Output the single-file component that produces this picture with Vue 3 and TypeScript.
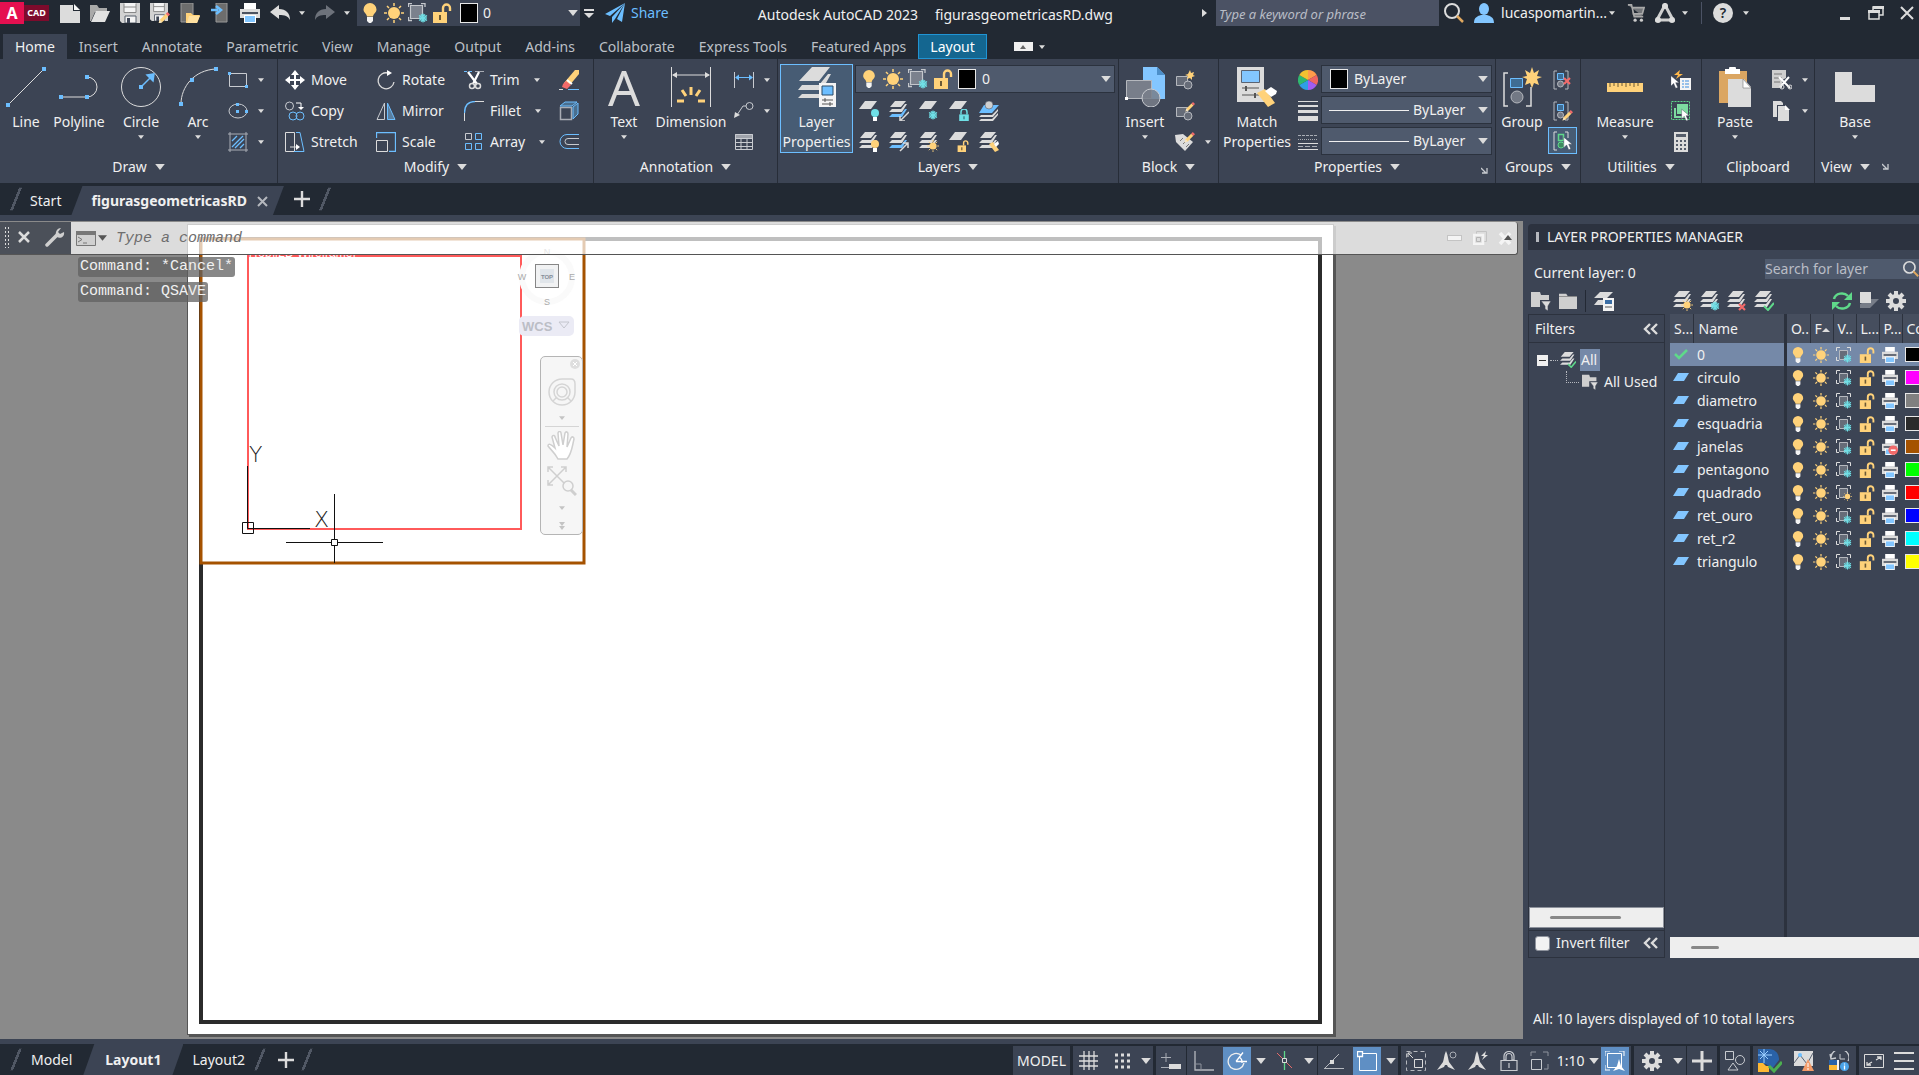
<script setup lang="ts">
import { ref } from 'vue'

interface Layer {
  name: string
  color: string
  noPlot?: boolean
  thawed?: boolean
}

const menuTabs: string[] = [
  'Home', 'Insert', 'Annotate', 'Parametric', 'View', 'Manage', 'Output',
  'Add-ins', 'Collaborate', 'Express Tools', 'Featured Apps', 'Layout',
]

const layers: Layer[] = [
  { name: '0', color: '#000000' },
  { name: 'circulo', color: '#ff00ff' },
  { name: 'diametro', color: '#808080' },
  { name: 'esquadria', color: '#2b2b2b' },
  { name: 'janelas', color: '#a55200', noPlot: true },
  { name: 'pentagono', color: '#00ff00' },
  { name: 'quadrado', color: '#ff0000', thawed: true },
  { name: 'ret_ouro', color: '#0000ff' },
  { name: 'ret_r2', color: '#00ffff' },
  { name: 'triangulo', color: '#ffff00' },
]

const modifyTools = [
  { id: 'move', label: 'Move' },
  { id: 'rotate', label: 'Rotate' },
  { id: 'trim', label: 'Trim', menu: true },
  { id: 'erase', label: '' },
  { id: 'copy', label: 'Copy' },
  { id: 'mirror', label: 'Mirror' },
  { id: 'fillet', label: 'Fillet', menu: true },
  { id: 'explode', label: '' },
  { id: 'stretch', label: 'Stretch' },
  { id: 'scale', label: 'Scale' },
  { id: 'array', label: 'Array', menu: true },
  { id: 'offset', label: '' },
]

const layerTools = [
  ['layoff', 'layiso', 'layfrz', 'laylck', 'laycur'],
  ['layon', 'layuniso', 'laythw', 'layulk', 'laymch'],
]

const activeTab = ref('Home')
const command = ref('')
const keyword = ref('')
const layerSearch = ref('')
const invert = ref(false)
</script>

<template>
  <div class="app">
    <svg class="defs" aria-hidden="true">
      <symbol id="down" viewBox="0 0 8 5"><path d="M0 0h8L4 5z" fill="#dcdcdc" /></symbol>
      <symbol id="stack" viewBox="0 0 20 20">
        <path d="M6 0h11l-5 6H1zM3 8h9l4-5h2l-5 8H0zM3 13h9l4-5h2l-5 8H0z" fill="#dcdcdc" />
      </symbol>
      <symbol id="bulb" viewBox="0 0 20 20">
        <path d="M10 0a6.500 6.500 0 0 1 6.500 6.500c0 3-3 4-3.500 7H7c-.5-3-3.500-4-3.500-7A6.500 6.500 0 0 1 10 0z" fill="#ffd27a" />
        <path d="M7 14h6v4l-2 2H9l-2-2z" fill="#f4f4f4" />
      </symbol>
      <symbol id="sun" viewBox="0 0 20 20">
        <circle cx="10" cy="10" r="6" fill="#ffd27a" />
        <path d="M10 0v3M10 17v3M0 10h3M17 10h3M3 3l2 2M15 15l2 2M17 3l-2 2M5 15l-2 2" stroke="#ffd27a" stroke-width="1.500" />
      </symbol>
      <symbol id="flake" viewBox="0 0 20 20">
        <circle cx="10" cy="10" r="8" fill="#6fdfe6" fill-opacity=".35" />
        <path d="M10 1v18M2 5l16 10M18 5L2 15M6 3l4 4 4-4M6 17l4-4 4 4M2 10h16" stroke="#6fdfe6" stroke-width="2.200" fill="none" />
      </symbol>
      <symbol id="vp" viewBox="0 0 20 20">
        <path d="M2.500 2.500h12v13h-12z" fill="#7b818d" stroke="#c4c7cc" stroke-width="1.200" />
        <path d="M.5 4V.5H4M13 .5h4V4M.5 14v3.500H4" fill="none" stroke="#c4c7cc" stroke-width="1.300" />
      </symbol>
      <symbol id="vpfrz" viewBox="0 0 20 20">
        <use href="#vp" width="20" height="20" /><use href="#flake" x="10" y="10" width="10" height="10" />
      </symbol>
      <symbol id="vpopen" viewBox="0 0 16 16">
        <path d="M3.500 3.500h8v9h-8z" fill="#666c78" stroke="#b5b8be" /><path d="M.5 4V.5H4M11 .5h3.500V4M.5 10v3.500H3" fill="none" stroke="#dcdcdc" />
      </symbol>
      <symbol id="rowfrz" viewBox="0 0 16 16"><use href="#vpopen" width="16" height="16" /><use href="#flake" x="7" y="7" width="9" height="9" /></symbol>
      <symbol id="rowsun" viewBox="0 0 16 16"><use href="#vpopen" width="16" height="16" /><use href="#sun" x="7" y="7" width="9" height="9" /></symbol>
      <symbol id="unlock" viewBox="0 0 20 20">
        <path d="M1 9h14v11H1z" fill="#ffd27a" />
        <path d="M11 9V5a3.500 3.500 0 0 1 7 0v3" fill="none" stroke="#ffd27a" stroke-width="2.400" />
        <path d="M8 12v5" stroke="#6d5a35" stroke-width="2" />
      </symbol>
      <symbol id="lock" viewBox="0 0 20 20">
        <path d="M2 9h16v11H2z" fill="#6fdfe6" /><path d="M5 9V5a5 5 0 0 1 10 0v4" fill="none" stroke="#6fdfe6" stroke-width="2.400" />
        <path d="M10 12v5" stroke="#34707a" stroke-width="2" />
      </symbol>
      <symbol id="print" viewBox="0 0 20 20">
        <path d="M4 0h12v6H4z" fill="#fff" /><path d="M0 6h20v9H0z" fill="#dcdcdc" /><path d="M2 9h16v2H2z" fill="#4b5260" />
        <path d="M4 12h12v8H4z" fill="#fff" /><path d="M5 13h10v6H5z" fill="#83c6ff" />
      </symbol>
      <symbol id="noprint" viewBox="0 0 20 20">
        <use href="#print" width="20" height="20" /><circle cx="14" cy="14" r="6" fill="#f26a6a" /><path d="M11 14h6" stroke="#fff" stroke-width="2" />
      </symbol>
      <symbol id="floppy" viewBox="0 0 20 20">
        <path d="M0 0h20v20H2l-2-2z" fill="#d2d2d2" /><path d="M4 0h12v9H4z" fill="#f4f4f4" /><path d="M4 4h12M4 .5v9h12v-9" stroke="#888" fill="none" />
        <path d="M5 13h11v7H5z" fill="#f4f4f4" stroke="#59606d" /><path d="M7 15h3v5H7z" fill="#3c4454" />
      </symbol>
      <symbol id="pencil" viewBox="0 0 20 20">
        <path d="M1 19l2-6L13 3l4 4L7 17z" fill="#ffd27a" /><path d="M13 3l3-3 4 4-3 3z" fill="#f26a6a" /><path d="M1 19l2-6 4 4z" fill="#f7e6c4" />
      </symbol>
      <symbol id="folder" viewBox="0 0 20 20"><path d="M0 2h8l2 3h10v14H0z" fill="#cfcfcf" /><path d="M0 5h20" stroke="#888" /></symbol>
      <symbol id="mag" viewBox="0 0 20 20">
        <circle cx="8" cy="8" r="7" fill="none" stroke="#dcdcdc" stroke-width="2" /><path d="M13 13l6 6" stroke="#e0a860" stroke-width="2.500" />
      </symbol>
      <symbol id="gear" viewBox="0 0 20 20">
        <circle cx="10" cy="10" r="5" fill="none" stroke="#dcdcdc" stroke-width="4" />
        <path d="M10 0v4M10 16v4M0 10h4M16 10h4M3 3l3 3M14 14l3 3M17 3l-3 3M6 14l-3 3" stroke="#dcdcdc" stroke-width="4" />
      </symbol>
      <symbol id="cursor" viewBox="0 0 20 20"><path d="M4 1v15l4-4 3 7 3-1-3-7h5z" fill="#fff" stroke="#3c4454" stroke-width="0.600" /></symbol>
      <symbol id="plus" viewBox="0 0 16 16"><path d="M8 0v16M0 8h16" stroke="#dcdcdc" stroke-width="2.400" /></symbol>
      <symbol id="chev" viewBox="0 0 16 12"><path d="M7 1L2 6l5 5M14 1L9 6l5 5" fill="none" stroke="#dcdcdc" stroke-width="2.400" /></symbol>
      <symbol id="corner" viewBox="0 0 8 8"><path d="M0 1l5 5M6 1v5H1" fill="none" stroke="#c8cbd0" stroke-width="1.300" /></symbol>

      <symbol id="new" viewBox="0 0 20 20"><path d="M0 2h13v6h7v12H0z" fill="#dcdcdc" /><path d="M14 1l6 6h-6z" fill="#f8f8f8" /></symbol>
      <symbol id="open" viewBox="0 0 20 20"><path d="M0 2h7l2 3h8v4H5L1 18H0z" fill="#a9a9a9" /><path d="M6 8h14l-5 11H1z" fill="#e2e2e2" /></symbol>
      <symbol id="saveas" viewBox="0 0 20 20"><use href="#floppy" width="18" height="18" /><use href="#pencil" x="8" y="9" width="12" height="12" /></symbol>
      <symbol id="mobopen" viewBox="0 0 20 20">
        <path d="M1 0h12v19H1z" fill="#6d6d6d" stroke="#999" /><path d="M6 10h5l2 2h7l-3 8H6z" fill="#ffd27a" /><path d="M9 13h11l-3 7H7z" fill="#ffe0a0" />
      </symbol>
      <symbol id="mobsave" viewBox="0 0 20 20">
        <path d="M6 0h11v19H6z" fill="#6d6d6d" stroke="#999" /><path d="M1 7h7M6 3l5 4-5 4" stroke="#6cbeff" stroke-width="2.500" fill="none" />
      </symbol>
      <symbol id="undo" viewBox="0 0 20 20"><path d="M0 9l9-7v4c7 0 11 4 11 11-2-4-5-5-11-5v4z" /></symbol>
      <symbol id="redo" viewBox="0 0 20 20"><path d="M20 9l-9-7v4C4 6 0 10 0 17c2-4 5-5 11-5v4z" /></symbol>
      <symbol id="plane" viewBox="0 0 20 20"><path d="M20 0L0 11l5 2zM20 0L7 14v6l3-4zM20 0l-8 16 5 3z" fill="#6cbeff" /></symbol>
      <symbol id="user" viewBox="0 0 20 20"><ellipse cx="10" cy="6" rx="5" ry="6" fill="#83c6ff" /><path d="M0 20c0-6 4-7 7-8h6c3 1 7 2 7 8z" fill="#83c6ff" /></symbol>
      <symbol id="cart" viewBox="0 0 20 20"><path d="M1 1h4l3 13h10M6 4h13l-2 7H7z" stroke="#a9a9a9" stroke-width="1.800" fill="#a9a9a9" fill-opacity=".6" /><circle cx="9" cy="18" r="1.800" fill="#ccc" /><circle cx="16" cy="18" r="1.800" fill="#ccc" /></symbol>
      <symbol id="appstore" viewBox="0 0 20 20"><path d="M10 2L2 17h16z" fill="none" stroke="#cfcfcf" stroke-width="3" /><circle cx="10" cy="3" r="3" fill="#dcdcdc" /><circle cx="3" cy="17" r="3" fill="#dcdcdc" /><circle cx="17" cy="17" r="3" fill="#dcdcdc" /></symbol>

      <symbol id="line" viewBox="0 0 40 40"><path d="M2 38L38 2" stroke="#dcdcdc" /><path d="M0 36h4v4H0zM36 0h4v4h-4z" fill="#6cbeff" /></symbol>
      <symbol id="polyline" viewBox="0 0 40 40"><path d="M2 30h26a10 10 0 0 0 0-20" fill="none" stroke="#dcdcdc" /><path d="M0 28h4v4H0zM26 28h4v4h-4zM26 8h4v4h-4z" fill="#6cbeff" /></symbol>
      <symbol id="circle" viewBox="0 0 40 40"><circle cx="20" cy="20" r="19.500" fill="none" stroke="#dcdcdc" /><path d="M20 20L32 8M26 8l7-1-1 7z" stroke="#6cbeff" fill="#6cbeff" stroke-width="1.500" /><path d="M18 18h4v4h-4z" fill="#6cbeff" /></symbol>
      <symbol id="arc" viewBox="0 0 40 40"><path d="M3 37C3 20 16 3 38 2" fill="none" stroke="#dcdcdc" /><path d="M1 35h4v4H1zM12 11h4v4h-4zM36 0h4v4h-4z" fill="#6cbeff" /></symbol>
      <symbol id="rect" viewBox="0 0 20 20"><path d="M1.500 3.500h17v13h-17z" fill="none" stroke="#c8cbd0" /><path d="M0 2h3v3H0zM17 15h3v3h-3z" fill="#6cbeff" /></symbol>
      <symbol id="ellipse" viewBox="0 0 20 20"><ellipse cx="10" cy="10" rx="9" ry="7" fill="none" stroke="#c8cbd0" /><path d="M8 2h3v3H8zM8 9h3v3H8zM17 9h3v3h-3z" fill="#6cbeff" /></symbol>
      <symbol id="hatch" viewBox="0 0 20 20"><path d="M2 0v20M18 0v20M0 2h20M0 18h20" stroke="#a9adb5" /><path d="M4 9l5-5M4 15L15 4M7 16l9-9M12 16l4-4" stroke="#6cbeff" stroke-width="1.300" /></symbol>

      <symbol id="move" viewBox="0 0 20 20"><path d="M10 3v14M3 10h14" stroke="#fff" stroke-width="2" /><path d="M10 0l4 5H6zM10 20l4-5H6zM0 10l5-4v8zM20 10l-5-4v8z" fill="#fff" /></symbol>
      <symbol id="copy" viewBox="0 0 20 20"><circle cx="4.500" cy="5" r="4" fill="none" stroke="#c8cbd0" /><path d="M11 2h5v5" fill="none" stroke="#fff" /><path d="M13 6h6l-3 3z" fill="#fff" /><circle cx="8" cy="15" r="4" fill="none" stroke="#6cbeff" /><circle cx="15" cy="15" r="4" fill="none" stroke="#6cbeff" /></symbol>
      <symbol id="stretch" viewBox="0 0 20 20"><path d="M.5.500h9v19h-9zM5 15h7" fill="none" stroke="#dcdcdc" /><path d="M11 12l4 3-4 3z" fill="#fff" /><path d="M11 .5h4l4 19H9" fill="none" stroke="#6cbeff" /></symbol>
      <symbol id="rotate" viewBox="0 0 20 20"><path d="M12 3a8 8 0 1 0 6 9" fill="none" stroke="#dcdcdc" stroke-width="1.300" /><path d="M11 0l5 3-5 3z" fill="#fff" /></symbol>
      <symbol id="mirror" viewBox="0 0 20 20"><path d="M8.500 2v16.500H1z" fill="none" stroke="#c8cbd0" /><path d="M11.500 2v16.500H19z" fill="#5a7fa0" stroke="#6cbeff" /></symbol>
      <symbol id="scale" viewBox="0 0 20 20"><path d="M.5 6V.5h19v19H13" fill="none" stroke="#6cbeff" stroke-width="1.300" /><path d="M.5 8.500h11v11H.5z" fill="none" stroke="#dcdcdc" /></symbol>
      <symbol id="trim" viewBox="0 0 20 20"><path d="M0 1.500h9" stroke="#6cbeff" stroke-dasharray="3 2" /><path d="M11 1.500h9" stroke="#a9adb5" /><path d="M4 2l9 12M15 2L9 14" stroke="#fff" stroke-width="2.200" /><circle cx="8" cy="16" r="2.500" fill="none" stroke="#dcdcdc" stroke-width="1.500" /><circle cx="14" cy="16" r="2.500" fill="none" stroke="#dcdcdc" stroke-width="1.500" /></symbol>
      <symbol id="fillet" viewBox="0 0 20 20"><path d="M.5 20V12M10 .5h10" stroke="#dcdcdc" /><path d="M.5 12C.5 5 4 .5 11 .5" fill="none" stroke="#6cbeff" stroke-width="1.300" /></symbol>
      <symbol id="array" viewBox="0 0 20 20"><path d="M1.500 1.500h6v6h-6z" fill="none" stroke="#c8cbd0" /><path d="M11.500 1.500h6v6h-6zM1.500 11.500h6v6h-6zM11.500 11.500h6v6h-6z" fill="none" stroke="#6cbeff" /></symbol>
      <symbol id="erase" viewBox="0 0 20 20"><path d="M16 0h4v4L10 16l-5-3z" fill="#ffd27a" /><path d="M7 11l5 4-4 4-5-2 1-3z" fill="#f26a6a" /><path d="M8 10l5 4" stroke="#fff" stroke-width="2" /><path d="M0 19.500h4" stroke="#dcdcdc" /><path d="M9 19.500h11" stroke="#6cbeff" /></symbol>
      <symbol id="explode" viewBox="0 0 20 20"><path d="M1.500 6.500h11v12h-11z" fill="none" stroke="#a9adb5" stroke-width="1.500" /><path d="M1 5l5-4h12l-5 4zM14 6l5-4v11l-5 5z" fill="#4a6f8f" stroke="#6cbeff" /></symbol>
      <symbol id="offset" viewBox="0 0 20 20"><path d="M20 2.500H8a7 7 0 0 0 0 14h12" fill="none" stroke="#6cbeff" /><path d="M20 6.500H9a3 3 0 0 0 0 6h11" fill="none" stroke="#c8cbd0" /></symbol>

      <symbol id="dim" viewBox="0 0 40 40"><path d="M.5 0v40M39.500 0v40M2 8h36" stroke="#dcdcdc" /><path d="M1 8l5-3v6zM39 8l-5-3v6z" fill="#dcdcdc" /><path d="M20 20v8M11 23l4 6M29 23l-4 6M6 34h7M27 34h7" stroke="#ffd27a" stroke-width="3" /></symbol>
      <symbol id="lindim" viewBox="0 0 20 20"><path d="M.5 2v16M19.500 2v16" stroke="#c8cbd0" /><path d="M2 7.500h16" stroke="#6cbeff" /><path d="M1 7.500l4-3v6zM19 7.500l-4-3v6z" fill="#6cbeff" /></symbol>
      <symbol id="leader" viewBox="0 0 20 20"><circle cx="15.500" cy="5" r="3.500" fill="none" stroke="#c8cbd0" /><path d="M12 5H9L3 14" fill="none" stroke="#c8cbd0" /><path d="M0 17l1-6 5 3z" fill="#dcdcdc" /></symbol>
      <symbol id="grid-table" viewBox="0 0 20 20"><path d="M1 2h18v4H1z" fill="#9ea2aa" /><path d="M1.500 2.500h17v15h-17zM1 6.500h18M1 10.500h18M1 14.500h18M7 6v12M13 6v12" fill="none" stroke="#c8cbd0" /></symbol>

      <symbol id="layprop" viewBox="0 0 40 40">
        <path d="M15 0h18L22 14H2zM5 18h17l9-11h3l-5 9-6 7H1zM5 27h17v4H1z" fill="#dcdcdc" /><path d="M22 16h17v24H22z" fill="#f4f4f4" />
        <path d="M25 19h11v9H25z" fill="#6cbeff" stroke="#2b4a66" /><path d="M25 33h11M25 37h11M28 31v4M33 35v4" stroke="#555" />
      </symbol>
      <symbol id="layoff" viewBox="0 0 20 20"><path d="M6 0h12l-6 8H0z" fill="#dcdcdc" /><circle cx="16" cy="12" r="4" fill="#6fdfe6" /><path d="M14 16h4v4h-4z" fill="#fff" /></symbol>
      <symbol id="layiso" viewBox="0 0 20 20"><path d="M6 0h11l-5 6H1zM3 8h9l4-5h2l-5 8H0z" fill="#dcdcdc" /><path d="M3 13h9l4-5h2l-5 8H0z" fill="#6cbeff" /><path d="M20 11l-8 8M11 15v5h5" stroke="#dcdcdc" fill="none" stroke-width="1.500" /></symbol>
      <symbol id="layfrz" viewBox="0 0 20 20"><path d="M6 0h12l-6 8H0z" fill="#dcdcdc" /><use href="#flake" x="9" y="9" width="10" height="10" /></symbol>
      <symbol id="laylck" viewBox="0 0 20 20"><path d="M6 0h12l-6 8H0z" fill="#dcdcdc" /><use href="#lock" x="9" y="8" width="12" height="12" /></symbol>
      <symbol id="laycur" viewBox="0 0 20 20"><path d="M5 4h15l-7 8H0z" fill="#6cbeff" /><path d="M2 14h11l6-6v2l-5 6H0zM2 18h11l6-6v2l-5 6H0z" fill="#dcdcdc" /><circle cx="10" cy="4" r="4" fill="#cfcfcf" stroke="#3c4454" stroke-width=".5" /></symbol>
      <symbol id="layon" viewBox="0 0 20 20"><use href="#stack" width="20" height="20" /><circle cx="16" cy="12" r="4" fill="#ffd27a" /><path d="M14 16h4v4h-4z" fill="#fff" /></symbol>
      <symbol id="layuniso" viewBox="0 0 20 20"><path d="M6 0h11l-5 6H1zM3 8h9l4-5h2l-5 8H0z" fill="#dcdcdc" /><path d="M3 13h9l4-5h2l-5 8H0z" fill="#6cbeff" /><path d="M11 19l8-8M14 11h5v5" stroke="#dcdcdc" fill="none" stroke-width="1.500" /></symbol>
      <symbol id="laythw" viewBox="0 0 20 20"><use href="#stack" width="20" height="20" /><use href="#sun" x="8" y="8" width="12" height="12" /></symbol>
      <symbol id="layulk" viewBox="0 0 20 20"><path d="M6 0h12l-6 8H0z" fill="#dcdcdc" /><use href="#unlock" x="8" y="8" width="12" height="12" /></symbol>
      <symbol id="laymch" viewBox="0 0 20 20"><use href="#stack" width="20" height="20" /><path d="M10 12l4-2 6 8-4 2z" fill="#ffd27a" /><path d="M15 12l4-3 1 3-3 3z" fill="#fff" /></symbol>
      <symbol id="laydel" viewBox="0 0 20 20"><use href="#stack" width="20" height="20" /><path d="M12 13l6 6M18 13l-6 6" stroke="#f26a6a" stroke-width="2.200" /></symbol>
      <symbol id="layset" viewBox="0 0 20 20"><use href="#stack" width="20" height="20" /><path d="M10 15l4 4 6-7" stroke="#5fd98a" stroke-width="2" fill="none" /></symbol>
      <symbol id="laynewfrz" viewBox="0 0 20 20"><use href="#stack" width="20" height="20" /><use href="#flake" x="10" y="10" width="10" height="10" /></symbol>

      <symbol id="insert" viewBox="0 0 40 40"><path d="M18 0h14l8 8v24H18z" fill="#83c6ff" /><path d="M32 0v8h8z" fill="#4c8fc9" /><path d="M1.500 13.500h25v18h-25z" fill="#787e8a" stroke="#b5b8be" /><circle cx="26" cy="31" r="9" fill="#787e8a" fill-opacity=".85" stroke="#c8cbd0" /><path d="M0 30h3v3H0z" fill="#fff" /></symbol>
      <symbol id="blk" viewBox="0 0 20 20"><path d="M1.500 6.500h11v9h-11z" fill="#666c78" stroke="#b5b8be" /><circle cx="13" cy="15" r="4" fill="#666c78" stroke="#b5b8be" /></symbol>
      <symbol id="blknew" viewBox="0 0 20 20"><use href="#blk" width="20" height="20" /><path d="M15 0l1 3 3-1-1 3 2 1-3 1v3l-2-2-3 1 1-3-3-1 3-1z" fill="#ffd27a" /></symbol>
      <symbol id="blkedit" viewBox="0 0 20 20"><use href="#blk" width="20" height="20" /><use href="#pencil" x="10" y="0" width="10" height="12" /></symbol>
      <symbol id="attr" viewBox="0 0 20 20"><path d="M0 3l8-1 10 8-8 9L1 10z" fill="#dcdcdc" /><path d="M5 9l3-3M8 12l3-3M11 15l3-3" stroke="#777" /><use href="#pencil" x="9" y="0" width="11" height="11" /></symbol>
      <symbol id="match" viewBox="0 0 40 40"><path d="M0 0h27v35H0z" fill="#dcdcdc" /><path d="M4.500 3.500h18v12h-18z" fill="#83c6ff" stroke="#5a6372" /><path d="M5 21h17M5 28h17" stroke="#555" /><path d="M9 19v5M18 26v5" stroke="#555" stroke-width="2" /><path d="M20 26l8-4 10 14-7 4z" fill="#ffd27a" /><path d="M28 24l6-4 3 2 3 2-1 3-5 3z" fill="#fff" /></symbol>
      <symbol id="wheel" viewBox="0 0 20 20"><path d="M10 10V0a10 10 0 0 1 8.700 5z" fill="#ff9b4a" /><path d="M10 10l8.700-5a10 10 0 0 1 0 10z" fill="#ef6461" /><path d="M10 10l8.700 5A10 10 0 0 1 10 20z" fill="#a05df2" /><path d="M10 10v10a10 10 0 0 1-8.700-5z" fill="#2f9fe5" /><path d="M10 10l-8.700 5a10 10 0 0 1 0-10z" fill="#2fb96f" /><path d="M10 10L1.300 5A10 10 0 0 1 10 0z" fill="#f2c230" /></symbol>
      <symbol id="weight" viewBox="0 0 20 20"><path d="M0 0h20v1H0zM0 4h20v2H0zM0 9h20v3H0zM0 15h20v5H0z" fill="#dcdcdc" /></symbol>
      <symbol id="ltype" viewBox="0 0 20 20"><path d="M0 3.500h20" stroke="#a9adb5" stroke-dasharray="3 1" /><path d="M0 7.500h20" stroke="#a9adb5" stroke-dasharray="1 1" /><path d="M0 11.500h20M0 17.500h20" stroke="#dcdcdc" /><path d="M0 14.500h20" stroke="#a9adb5" stroke-dasharray="5 2" /></symbol>
      <symbol id="group" viewBox="0 0 40 40"><path d="M6 6H2v33h4M24 39h5V20" fill="none" stroke="#dcdcdc" stroke-width="1.500" /><path d="M8.500 11.500h12v9h-12z" fill="#3f6d94" stroke="#6cbeff" /><circle cx="15" cy="30" r="6" fill="#737985" stroke="#b5b8be" /><path d="M30 0l2 6 5-3-2 6 5 1-5 2 2 6-5-2-2 5-2-5-5 2 2-6-5-2 5-1-2-6 5 3z" fill="#ffd27a" /></symbol>
      <symbol id="grp" viewBox="0 0 20 20"><path d="M4 1H1v18h3M12 19h3V1h-3" fill="none" stroke="#b5b8be" /><path d="M4.500 3.500h6v6h-6z" fill="#3f6d94" stroke="#6cbeff" /><circle cx="7.500" cy="14" r="3" fill="#737985" stroke="#b5b8be" /></symbol>
      <symbol id="ungroup" viewBox="0 0 20 20"><use href="#grp" width="20" height="20" /><path d="M11 8l6 6M17 8l-6 6" stroke="#f26a6a" stroke-width="2.200" /></symbol>
      <symbol id="grpedit" viewBox="0 0 20 20"><use href="#grp" width="20" height="20" /><use href="#pencil" x="9" y="9" width="11" height="11" /></symbol>
      <symbol id="grpsel" viewBox="0 0 20 20"><path d="M4 1H1v18h3M12 1h3v6" fill="none" stroke="#dcdcdc" /><path d="M5.500 3.500h5v6h-5z" fill="none" stroke="#5fd98a" stroke-width="1.500" /><circle cx="8" cy="14" r="3" fill="#3f8a60" stroke="#5fd98a" /><use href="#cursor" x="8" y="5" width="14" height="15" /></symbol>
      <symbol id="measure" viewBox="0 0 40 40"><path d="M2 16h36v9H2z" fill="#ffd27a" /><path d="M5 16v4M9 16v3M13 16v4M17 16v3M21 16v4M25 16v3M29 16v4M33 16v3" stroke="#6d5a35" /></symbol>
      <symbol id="quick" viewBox="0 0 20 20"><path d="M9 8h11v12H9z" fill="#f4f4f4" /><path d="M11 11h2M14 11h4M11 14h2M14 14h4M11 17h2M14 17h4" stroke="#3b8de0" /><use href="#cursor" x="-3" y="4" width="14" height="16" /><path d="M9 0L3 5h4L5 9l7-5H8z" fill="#ffb84a" /></symbol>
      <symbol id="selall" viewBox="0 0 20 20"><path d="M.5.500h18v18H.5z" fill="none" stroke="#5fd98a" stroke-dasharray="2 1" /><path d="M6 3h11v10H6zM3 7h2v8h10v2H3z" fill="#7ddca0" /><use href="#cursor" x="8" y="7" width="13" height="14" /></symbol>
      <symbol id="calc" viewBox="0 0 20 20"><path d="M3 0h14v20H3z" fill="#dcdcdc" /><path d="M5 2h10v3H5zM5 8h2v2H5zM9 8h2v2H9zM13 8h2v2h-2zM5 12h2v2H5zM9 12h2v2H9zM13 12h2v2h-2zM5 16h2v2H5zM9 16h2v2H9zM13 16h2v2h-2z" fill="#555d6b" /></symbol>
      <symbol id="paste" viewBox="0 0 40 40"><path d="M4 4h28v32H4z" fill="#dba662" /><path d="M10 2h4a3 3 0 0 1 7 0h4v5H10z" fill="#fff" /><path d="M13 12h16l7 8v20H13z" fill="#dcdcdc" /><path d="M28 12v9h8z" fill="#fff" stroke="#777" stroke-width=".6" /></symbol>
      <symbol id="cut" viewBox="0 0 20 20"><path d="M0 0h14v8l-4 2v8H0z" fill="#cfcfcf" /><path d="M2 4h8M2 8h8M2 12h6" stroke="#777" /><path d="M7 7l11 11M17 7L8 17" stroke="#fff" stroke-width="2" /><circle cx="10" cy="17" r="2" fill="none" stroke="#dcdcdc" /><circle cx="18" cy="17" r="2" fill="none" stroke="#dcdcdc" /></symbol>
      <symbol id="copyclip" viewBox="0 0 20 20"><path d="M1 0h8l2 2v2H5v12H1z" fill="#dcdcdc" /><path d="M6 5h8l3 4v11H6z" fill="#dcdcdc" /><path d="M13 4v5h5z" fill="#fff" /></symbol>
      <symbol id="base" viewBox="0 0 40 40"><path d="M0 5h17v13h23v17H0z" fill="#dcdcdc" /></symbol>

      <symbol id="refresh" viewBox="0 0 20 20"><path d="M2 8a8 7 0 0 1 14-3M18 12a8 7 0 0 1-14 3" fill="none" stroke="#5fd98a" stroke-width="2.500" /><path d="M20 1v8h-8zM0 19v-8h8z" fill="#5fd98a" /></symbol>
      <symbol id="shade" viewBox="0 0 20 20"><path d="M11 8h9l-9 9H1v-4z" fill="#777d88" /><path d="M1 1h11v11H1z" fill="#dcdcdc" /></symbol>
      <symbol id="newprop" viewBox="0 0 20 20"><path d="M6 1h13l-6 6H0zM4 9h9v5H0z" fill="#dcdcdc" /><path d="M9 7h11v13H9z" fill="#f4f4f4" /><path d="M11 9h7v4h-7z" fill="#3b6ea5" /><path d="M11 16h7" stroke="#555" /></symbol>
      <symbol id="filter" viewBox="0 0 20 20"><path d="M0 1h9l1 3h8v5H9v7H0z" fill="#cfcfcf" /><path d="M10 10h10l-3 5v5l-3-2v-3z" fill="#dcdcdc" stroke="#3c4454" stroke-width=".6" /></symbol>
      <symbol id="tick" viewBox="0 0 16 16"><path d="M2 7l4 4 8-8" fill="none" stroke="#5fd98a" stroke-width="2.500" /></symbol>
      <symbol id="slab" viewBox="0 0 16 16"><path d="M5 3h11l-5 8H0z" fill="#83c6ff" /></symbol>

      <symbol id="grid" viewBox="0 0 20 20"><path d="M5 0v19M10 0v19M15 0v19M0 5h19M0 10h19M0 15h19" stroke="#dcdcdc" stroke-width="1.300" /></symbol>
      <symbol id="dots" viewBox="0 0 20 20"><path d="M3 4h15M3 10h15M3 16h15" stroke="#dcdcdc" stroke-width="3" stroke-dasharray="3 3" /></symbol>
      <symbol id="dyn" viewBox="0 0 20 20"><path d="M5 2v9M0 6.500h10M0 16.500h8" stroke="#a9adb5" /><path d="M8 13h12v5H8z" fill="#dcdcdc" /></symbol>
      <symbol id="ortho" viewBox="0 0 20 20"><path d="M1 0v19h19" fill="none" stroke="#b5b8be" stroke-width="1.300" /><path d="M1 13h6v6" fill="none" stroke="#8d929c" /></symbol>
      <symbol id="polar" viewBox="0 0 20 20"><path d="M14 4a8 8 0 1 0 3 8" fill="none" stroke="#eee" stroke-width="1.300" /><path d="M9 10.500h11M9 10.500l7-9M12 6a6 6 0 0 1 3 6" fill="none" stroke="#fff" stroke-width="1.300" /></symbol>
      <symbol id="iso" viewBox="0 0 20 20"><path d="M2 2l6 6M11 11l6 6" stroke="#e56a6a" /><path d="M9.500 0v7M9.500 12v7" stroke="#5fd98a" stroke-width="1.300" /><path d="M7.500 7.500h4v4h-4z" fill="none" stroke="#dcdcdc" /></symbol>
      <symbol id="track" viewBox="0 0 20 20"><path d="M0 17.500h20M1 17L15 3" stroke="#b5b8be" /><path d="M6 9h4v4H6z" fill="#dcdcdc" /></symbol>
      <symbol id="osnap" viewBox="0 0 20 20"><path d="M2.500 2.500h17v17h-17z" fill="none" stroke="#fff" /><path d="M.5.500h5v5h-5z" fill="#5f8fc4" stroke="#fff" stroke-width="1.300" /></symbol>
      <symbol id="maxvp" viewBox="0 0 20 20"><path d="M.5.500h19v19H.5z" fill="none" stroke="#b5b8be" stroke-dasharray="4 3" /><path d="M8.500 8.500h8v8h-8z" fill="none" stroke="#dcdcdc" /><path d="M7 7L2 2M2 6V2h4" fill="none" stroke="#dcdcdc" /></symbol>
      <symbol id="anno" viewBox="0 0 20 20"><path d="M9 0c2 4 2 8 3 11l6 8-7-3-1-2H8l-1 2-7 3 6-8C7 8 7 4 9 0z" fill="#dcdcdc" /><circle cx="16" cy="4" r="3" fill="none" stroke="#a9adb5" /></symbol>
      <symbol id="annoauto" viewBox="0 0 20 20"><path d="M9 0c2 4 2 8 3 11l6 8-7-3-1-2H8l-1 2-7 3 6-8C7 8 7 4 9 0z" fill="#dcdcdc" /><path d="M18 0l-5 5h3l-2 4 6-5h-3z" fill="#dcdcdc" /></symbol>
      <symbol id="vplock" viewBox="0 0 20 20"><path d="M2 9.500h16v10H2zM5 9V5a5 4.500 0 0 1 10 0v4h-2V5.500a3 3 0 0 0-6 0V9zM10 12v5" fill="none" stroke="#c8cbd0" stroke-width="1.200" /></symbol>
      <symbol id="vpscale" viewBox="0 0 20 20"><path d="M1.500 8.500h10v10h-10z" fill="none" stroke="#c8cbd0" /><path d="M1 5V1h5M13 1h5v4M18 13v5h-4" fill="none" stroke="#8d929c" /></symbol>
      <symbol id="annovis" viewBox="0 0 20 20"><path d="M2.500 2.500h14v14h-14zM0 5V0h5M14 0h5v5M0 14v5h5" fill="none" stroke="#fff" /><path d="M14 8l2 7 4 5-6-2-6 2 4-5z" fill="#fff" /></symbol>
      <symbol id="isoobj" viewBox="0 0 20 20"><path d="M.5.500h8v8h-8z" fill="none" stroke="#c8cbd0" /><circle cx="15" cy="9" r="4.500" fill="none" stroke="#c8cbd0" /><path d="M8 12l5 7H3z" fill="none" stroke="#c8cbd0" /></symbol>
      <symbol id="trusted" viewBox="0 0 24 24"><path d="M0 0h12a10 10 0 0 1 9 11l-7 9-6-5H0z" fill="#2a62a8" /><path d="M6 0v14M0 6h14M2 2l8 8M10 2L2 10" stroke="#9ccfff" /><path d="M0 14h5l3 3h3v6H0z" fill="#fdb833" /><path d="M11 17l5 5 8-9" fill="none" stroke="#4caf50" stroke-width="3" /></symbol>
      <symbol id="perf" viewBox="0 0 20 20"><path d="M0 0h19v15H0z" fill="#dcdcdc" /><path d="M0 12L6 4l7 9 6-11" fill="none" stroke="#5a6372" /><circle cx="6" cy="4" r="2" fill="#6cbeff" /><path d="M14 8l6 12H8z" fill="#f29a68" /><path d="M14 12v4M14 17v2" stroke="#fff" /></symbol>
      <symbol id="hist" viewBox="0 0 20 20"><path d="M2 7a9 8 0 1 1 17 3M1 3l1 5 5-1" fill="none" stroke="#c8cbd0" stroke-width="1.300" /><path d="M11 3v5h5" fill="none" stroke="#c8cbd0" /><path d="M0 9h8v5H0z" fill="#2a62a8" /><path d="M8 9h2v10H8z" fill="#f4f4f4" /><path d="M0 14h8v5H0z" fill="#fdb833" /><circle cx="15.500" cy="15.500" r="4.500" fill="#4aa3e8" /><path d="M15.500 14.500v4M15.500 12.500v1" stroke="#fff" stroke-width="1.300" /></symbol>
      <symbol id="clean" viewBox="0 0 20 20"><path d="M.5 3.500h19v13H.5z" fill="none" stroke="#dcdcdc" /><path d="M12 9l5-3M13 6h4v3M8 11l-5 3M3 11v3h4" fill="none" stroke="#dcdcdc" stroke-width="1.300" /></symbol>
      <symbol id="burger" viewBox="0 0 20 20"><path d="M0 2h20M0 10h20M0 18h20" stroke="#dcdcdc" stroke-width="2" /></symbol>
    </svg>

    <header class="titlebar">
      <button class="logo" aria-label="Application menu"><span class="logo-a">A</span><span class="logo-cad">CAD</span></button>
      <div class="quick">
        <button v-for="id in ['new', 'open', 'floppy', 'saveas', 'mobopen', 'mobsave', 'print']" :key="id" :aria-label="id"><svg class="s20"><use :href="'#' + id" /></svg></button>
        <button class="undo" aria-label="Undo"><svg class="s20"><use href="#undo" /></svg><svg class="car"><use href="#down" /></svg></button>
        <button class="redo" aria-label="Redo"><svg class="s20"><use href="#redo" /></svg><svg class="car"><use href="#down" /></svg></button>
      </div>
      <div class="combo combo-title">
        <svg class="s20"><use href="#bulb" /></svg><svg class="s20"><use href="#sun" /></svg><svg class="s20"><use href="#vpfrz" /></svg><svg class="s20"><use href="#unlock" /></svg>
        <span class="swatch"></span>
        <select aria-label="Layer"><option>0</option></select>
        <svg class="carbig"><use href="#down" /></svg>
      </div>
      <button class="customize" aria-label="Customize"><svg width="10" height="9" viewBox="0 0 10 9"><path d="M0 0h10v2H0zM0 4h10L5 9z" fill="#dcdcdc" /></svg></button>
      <button class="share"><svg class="s20"><use href="#plane" /></svg>Share</button>
      <h1 class="title"><span>Autodesk AutoCAD 2023</span><span>figurasgeometricasRD.dwg</span></h1>
      <svg class="playhead" width="5" height="8" viewBox="0 0 5 8"><path d="M0 0l5 4-5 4z" fill="#dcdcdc" /></svg>
      <input v-model="keyword" class="keyword" type="text" placeholder="Type a keyword or phrase" aria-label="Keyword search">
      <div class="account">
        <button aria-label="Search"><svg class="s20"><use href="#mag" /></svg></button>
        <button class="who"><svg class="s20"><use href="#user" /></svg>lucaspomartin...<svg class="car"><use href="#down" /></svg></button>
        <button aria-label="Cart"><svg class="s18"><use href="#cart" /></svg></button>
        <button class="store" aria-label="App store"><svg class="s20"><use href="#appstore" /></svg><svg class="car"><use href="#down" /></svg></button>
        <button class="help" aria-label="Help"><span>?</span><svg class="car"><use href="#down" /></svg></button>
      </div>
      <div class="winbtns">
        <button aria-label="Minimize"><svg width="12" height="16" viewBox="0 0 12 16"><path d="M0 12h10v3H0z" fill="#dcdcdc" /></svg></button>
        <button aria-label="Restore"><svg width="16" height="14" viewBox="0 0 16 14"><path d="M5 5V1h10v8h-4M1 5h10v8H1z" fill="none" stroke="#dcdcdc" stroke-width="1.500" /><path d="M5 0h11v3H5zM0 4h12v3H0z" fill="#dcdcdc" /></svg></button>
        <button aria-label="Close"><svg width="14" height="14" viewBox="0 0 14 14"><path d="M1 1l12 12M13 1L1 13" stroke="#dcdcdc" stroke-width="2" /></svg></button>
      </div>
    </header>

    <nav class="menu">
      <button v-for="t in menuTabs" :key="t" :class="{ on: t === activeTab, ctx: t === 'Layout' }" @click="activeTab = t">{{ t }}</button>
      <button class="minrib" aria-label="Minimize ribbon"><i><svg width="6" height="4" viewBox="0 0 6 4"><path d="M0 4h6L3 0z" fill="#666" /></svg></i><svg class="car"><use href="#down" /></svg></button>
    </nav>

    <section class="ribbon">
      <div class="panel p-draw">
        <div class="tools">
          <button class="big w52"><svg class="s40"><use href="#line" /></svg>Line</button>
          <button class="big w54"><svg class="s40"><use href="#polyline" /></svg>Polyline</button>
          <button class="big w70"><svg class="s40"><use href="#circle" /></svg>Circle<svg class="car"><use href="#down" /></svg></button>
          <button class="big w44"><svg class="s40"><use href="#arc" /></svg>Arc<svg class="car"><use href="#down" /></svg></button>
          <div class="col pad8">
            <button v-for="id in ['rect', 'ellipse', 'hatch']" :key="id" :aria-label="id"><svg class="s20"><use :href="'#' + id" /></svg><svg class="car"><use href="#down" /></svg></button>
          </div>
        </div>
        <button class="cap">Draw<svg class="carcap"><use href="#down" /></svg></button>
      </div>

      <div class="panel p-modify">
        <div class="tools modify">
          <button v-for="m in modifyTools" :key="m.id" :aria-label="m.label || m.id"><svg class="s20"><use :href="'#' + m.id" /></svg><span v-if="m.label">{{ m.label }}</span><svg v-if="m.menu" class="car"><use href="#down" /></svg></button>
        </div>
        <button class="cap">Modify<svg class="carcap"><use href="#down" /></svg></button>
      </div>

      <div class="panel p-anno">
        <div class="tools">
          <button class="big w60"><span class="bigA">A</span>Text<svg class="car"><use href="#down" /></svg></button>
          <button class="big w74"><svg class="s40"><use href="#dim" /></svg>Dimension</button>
          <div class="col pad6">
            <button v-for="id in ['lindim', 'leader']" :key="id" :aria-label="id"><svg class="s20"><use :href="'#' + id" /></svg><svg class="car"><use href="#down" /></svg></button>
            <button aria-label="Table"><svg class="s20"><use href="#grid-table" /></svg></button>
          </div>
        </div>
        <button class="cap">Annotation<svg class="carcap"><use href="#down" /></svg></button>
      </div>

      <div class="panel p-layers">
        <div class="tools">
          <button class="big lit"><svg class="s40"><use href="#layprop" /></svg>Layer<br>Properties</button>
          <div class="laycol">
            <div class="combo boxed">
              <svg class="s18"><use href="#bulb" /></svg><svg class="s20"><use href="#sun" /></svg><svg class="s20"><use href="#vpfrz" /></svg><svg class="s20"><use href="#unlock" /></svg>
              <span class="swatch"></span>
              <select aria-label="Current layer"><option>0</option></select>
              <svg class="carbig"><use href="#down" /></svg>
            </div>
            <div v-for="(row, i) in layerTools" :key="i" class="layrow">
              <button v-for="id in row" :key="id" :aria-label="id"><svg class="s20"><use :href="'#' + id" /></svg></button>
            </div>
          </div>
        </div>
        <button class="cap">Layers<svg class="carcap"><use href="#down" /></svg></button>
      </div>

      <div class="panel p-block">
        <div class="tools">
          <button class="big w52"><svg class="s40"><use href="#insert" /></svg>Insert<svg class="car"><use href="#down" /></svg></button>
          <div class="col pad4">
            <button aria-label="Create block"><svg class="s20"><use href="#blknew" /></svg></button>
            <button aria-label="Edit block"><svg class="s20"><use href="#blkedit" /></svg></button>
            <button aria-label="Edit attributes"><svg class="s20"><use href="#attr" /></svg><svg class="car"><use href="#down" /></svg></button>
          </div>
        </div>
        <button class="cap">Block<svg class="carcap"><use href="#down" /></svg></button>
      </div>

      <div class="panel p-props">
        <div class="tools">
          <button class="big w76"><svg class="s40"><use href="#match" /></svg>Match<br>Properties</button>
          <div class="propcol">
            <div class="prow"><svg class="s20"><use href="#wheel" /></svg><div class="combo boxed"><span class="swatch"></span><select aria-label="Object color"><option>ByLayer</option></select><svg class="carbig"><use href="#down" /></svg></div></div>
            <div class="prow"><svg class="s20"><use href="#weight" /></svg><div class="combo boxed"><span class="rule"></span><select aria-label="Lineweight"><option>ByLayer</option></select><svg class="carbig"><use href="#down" /></svg></div></div>
            <div class="prow"><svg class="s20"><use href="#ltype" /></svg><div class="combo boxed"><span class="rule"></span><select aria-label="Linetype"><option>ByLayer</option></select><svg class="carbig"><use href="#down" /></svg></div></div>
          </div>
        </div>
        <button class="cap">Properties<svg class="carcap"><use href="#down" /></svg></button>
        <svg class="launch"><use href="#corner" /></svg>
      </div>

      <div class="panel p-groups">
        <div class="tools">
          <button class="big w52"><svg class="s40"><use href="#group" /></svg>Group</button>
          <div class="col">
            <button class="sq" aria-label="Ungroup"><svg class="s20"><use href="#ungroup" /></svg></button>
            <button class="sq" aria-label="Group edit"><svg class="s20"><use href="#grpedit" /></svg></button>
            <button class="sq sqon" aria-label="Group selection"><svg class="s20"><use href="#grpsel" /></svg></button>
          </div>
        </div>
        <button class="cap">Groups<svg class="carcap"><use href="#down" /></svg></button>
      </div>

      <div class="panel p-util">
        <div class="tools">
          <button class="big w88"><svg class="s40"><use href="#measure" /></svg>Measure<svg class="car"><use href="#down" /></svg></button>
          <div class="col pad2">
            <button v-for="id in ['quick', 'selall', 'calc']" :key="id" :aria-label="id"><svg class="s20"><use :href="'#' + id" /></svg></button>
          </div>
        </div>
        <button class="cap">Utilities<svg class="carcap"><use href="#down" /></svg></button>
      </div>

      <div class="panel p-clip">
        <div class="tools">
          <button class="big w66"><svg class="s40"><use href="#paste" /></svg>Paste<svg class="car"><use href="#down" /></svg></button>
          <div class="col pad4">
            <button v-for="id in ['cut', 'copyclip']" :key="id" :aria-label="id"><svg class="s20"><use :href="'#' + id" /></svg><svg class="car"><use href="#down" /></svg></button>
          </div>
        </div>
        <button class="cap">Clipboard</button>
      </div>

      <div class="panel p-view">
        <div class="tools">
          <button class="big w80"><svg class="s40"><use href="#base" /></svg>Base<svg class="car"><use href="#down" /></svg></button>
        </div>
        <button class="cap capview">View<svg class="carcap"><use href="#down" /></svg><svg class="corner"><use href="#corner" /></svg></button>
      </div>
    </section>

    <nav class="strip filetabs">
      <i class="slash"></i>
      <button class="tab">Start</button>
      <div class="tab active"><button>figurasgeometricasRD</button><button aria-label="Close tab"><svg width="11" height="11" viewBox="0 0 11 11"><path d="M1 1l9 9M10 1l-9 9" stroke="#b5b8be" stroke-width="2" /></svg></button></div>
      <button class="add" aria-label="New drawing"><svg class="s16"><use href="#plus" /></svg></button>
      <i class="slash"></i>
    </nav>

    <div class="work">
      <main class="canvas">
        <svg class="sheet">
          <rect x="189" y="5" width="1147" height="811" fill="#555" />
          <rect x="187" y="3" width="1147" height="811" fill="#555" />
          <rect x="188" y="4" width="1145" height="809" fill="#fff" />
          <rect x="201" y="18" width="1119" height="783" fill="none" stroke="#2b2b2b" stroke-width="4" />
          <rect x="201" y="18" width="383" height="324" fill="#fff" stroke="#a55200" stroke-width="3" />
          <rect x="248" y="35" width="273" height="273" fill="none" stroke="#ff5a5a" stroke-width="2" />
          <text x="249" y="36" class="vplabel">[Top][2D Wireframe]</text>
          <g fill="none" stroke="#111">
            <path d="M247.500 245v62.500h62.500M242.500 301.500h11v11h-11zM286 321.500h45M338 321.500h45M334.500 273v45M334.500 325v17M331.500 318.500h6v6h-6z" />
          </g>
          <text x="249" y="241" class="ucs">Y</text>
          <text x="314" y="306" class="ucs">X</text>
          <circle cx="547" cy="56" r="25" fill="none" stroke="#fafafa" stroke-width="6" />
          <rect x="535.500" y="43.500" width="23" height="23" fill="#f1f2f3" stroke="#868686" />
          <rect x="540" y="48" width="14" height="14" fill="#e0e5ea" />
          <text x="547" y="58" class="top">TOP</text>
          <g class="nsew"><text x="547" y="34">N</text><text x="522" y="59">W</text><text x="572" y="59">E</text><text x="547" y="84">S</text></g>
          <rect x="519" y="95" width="55" height="20" rx="5" fill="#ebebf5" />
          <text x="522" y="110" class="wcs">WCS</text>
          <path d="M559 101h10l-5 6z" fill="none" stroke="#c4c6ce" />
        </svg>
        <div class="navbar">
          <button class="nx" aria-label="Close navigation bar"><svg width="10" height="10" viewBox="0 0 10 10"><circle cx="5" cy="5" r="5" fill="#dedede" /><path d="M3 3l4 4M7 3L3 7" stroke="#fff" /></svg></button>
          <button aria-label="Steering wheel"><svg width="28" height="28" viewBox="0 0 28 28" fill="none" stroke="#d5d5d5" stroke-width="1.500"><path d="M14 1h9q4 0 4 5v8a13 13 0 1 1-13-13z" /><circle cx="14" cy="14" r="8" /><circle cx="14" cy="14" r="5" /><path d="M5 23l4-4M23 23l-4-4" /></svg></button>
          <svg class="nd" viewBox="0 0 8 5"><path d="M0 0h8L4 5z" fill="#c4c4c4" /></svg>
          <hr>
          <button aria-label="Pan"><svg width="30" height="30" viewBox="0 0 30 30" fill="#fff" stroke="#cfcfcf" stroke-width="1.500"><path d="M11 28C8 22 4 19 1 15c0-3 3-2 7 2L5 6c1-3 3-1 3 0l4 9-1-13c1-3 3-1 3 0l2 12 2-12c1-2 3-1 3 1l-1 13 4-9c1-2 3-1 3 1-2 8-2 14-7 20z" /></svg></button>
          <button aria-label="Zoom extents"><svg width="30" height="30" viewBox="0 0 30 30" fill="none" stroke="#cfcfcf" stroke-width="1.500"><path d="M1 1l18 18M19 1L1 19M1 6V1h5M14 1h5v5M1 14v5h5" /><circle cx="21" cy="20" r="5" fill="#f6f6f6" /><path d="M24 24l5 5" stroke-width="3" /></svg></button>
          <svg class="nd" viewBox="0 0 8 5"><path d="M0 0h8L4 5z" fill="#c4c4c4" /></svg>
          <svg class="nd2" viewBox="0 0 6 8"><path d="M0 0h6L3 4zM0 4h6L3 8z" fill="#c4c4c4" /></svg>
        </div>

        <div class="cmd">
          <div class="cmd-grip"><i></i><button aria-label="Close"><svg width="12" height="12" viewBox="0 0 12 12"><path d="M1 1l10 10M11 1L1 11" stroke="#dcdcdc" stroke-width="2.500" /></svg></button><button aria-label="Customize"><svg width="20" height="20" viewBox="0 0 20 20"><path d="M2 18L12 8" stroke="#cfcfcf" stroke-width="3.500" stroke-linecap="round" /><path d="M16 1l-3 4 2 2 4-2c1 5-4 7-7 5-3-4 0-9 4-9z" fill="#cfcfcf" /></svg></button></div>
          <label class="cmd-icon" for="cmdline"><svg width="20" height="15" viewBox="0 0 20 15"><path d="M.5.500h19v14H.5z" fill="#d0d0d0" stroke="#777" /><path d="M0 0h20v4H0z" fill="#777" /><path d="M2 6l4 2.500L2 11M7 12h4" stroke="#777" fill="none" /></svg><svg width="9" height="6" viewBox="0 0 8 5"><path d="M0 0h8L4 5z" fill="#555" /></svg></label>
          <input id="cmdline" v-model="command" type="text" placeholder="Type a command">
          <div class="cmd-win"><svg width="15" height="6"><rect x=".5" y=".5" width="14" height="5" fill="#f4f4f4" stroke="#c4c4c4" /></svg><svg width="14" height="14" viewBox="0 0 14 14"><path d="M3.500.500h10v10h-10z" fill="none" stroke="#c4c4c4" /><path d="M1 4h9v9H1z" fill="#ddd" stroke="#f4f4f4" stroke-width="2.500" /><path d="M3.500 6.500h4v4h-4z" fill="none" stroke="#b5b5b5" /></svg><svg width="15" height="13" viewBox="0 0 15 13"><path d="M2 1l10 11M12 1L2 12" stroke="#f4f4f4" stroke-width="3.500" /><path d="M6 8l4-5 4 5z" fill="#555" /></svg></div>
        </div>
        <div class="history"><p>Command: *Cancel*</p><p>Command: QSAVE</p></div>
      </main>

      <aside class="palette">
        <h2 class="pal-title"><i></i>LAYER PROPERTIES MANAGER</h2>
        <div class="pal-top"><span>Current layer: 0</span><div class="pal-search"><input v-model="layerSearch" type="text" placeholder="Search for layer" aria-label="Search for layer"><svg class="s16"><use href="#mag" /></svg></div></div>
        <div class="pal-bar">
          <div class="g1"><svg class="s20"><use href="#filter" /></svg><svg class="s18"><use href="#folder" /></svg><i></i><svg class="s20"><use href="#newprop" /></svg></div>
          <div class="g2"><svg v-for="id in ['laythw', 'laynewfrz', 'laydel', 'layset']" :key="id" class="s20"><use :href="'#' + id" /></svg></div>
          <div class="g3"><svg v-for="id in ['refresh', 'shade', 'gear']" :key="id" class="s20"><use :href="'#' + id" /></svg></div>
        </div>
        <div class="pal-body">
          <div class="filters">
            <div class="f-head">Filters<svg class="chev"><use href="#chev" /></svg></div>
            <ul class="tree">
              <li><i class="minus"></i><i class="dotted"></i><svg class="s16"><use href="#layset" /></svg><span class="sel">All</span></li>
              <li class="child"><i class="elbow"></i><svg class="s16"><use href="#filter" /></svg><span>All Used</span></li>
            </ul>
            <div class="hscroll"><i></i></div>
            <div class="invert"><label><input v-model="invert" type="checkbox">Invert filter</label><svg class="chev"><use href="#chev" /></svg></div>
          </div>
          <div class="list">
            <div class="tablewrap">
              <table>
                <thead><tr><th>S...</th><th class="nm">Name</th><th class="gap"></th><th>O..</th><th class="srt">F<svg width="8" height="4" viewBox="0 0 8 4"><path d="M0 4h8L4 0z" fill="#dcdcdc" /></svg></th><th>V..</th><th>L...</th><th>P...</th><th class="cl">Color</th></tr></thead>
                <tbody>
                  <tr v-for="(l, i) in layers" :key="l.name" :class="{ cur: i === 0 }">
                    <td><svg class="s16"><use :href="i === 0 ? '#tick' : '#slab'" /></svg></td>
                    <td class="nm">{{ l.name }}</td>
                    <td class="gap"></td>
                    <td><svg class="s16"><use href="#bulb" /></svg></td>
                    <td><svg class="s16"><use href="#sun" /></svg></td>
                    <td><svg class="s16"><use :href="l.thawed ? '#rowsun' : '#rowfrz'" /></svg></td>
                    <td><svg class="s16"><use href="#unlock" /></svg></td>
                    <td><svg class="s16"><use :href="l.noPlot ? '#noprint' : '#print'" /></svg></td>
                    <td class="cl"><i :style="{ background: l.color }"></i></td>
                  </tr>
                </tbody>
              </table>
            </div>
            <div class="hscroll2"><i></i></div>
          </div>
        </div>
        <p class="pal-status">All: 10 layers displayed of 10 total layers</p>
      </aside>
    </div>

    <footer class="strip bottom">
      <i class="slash"></i>
      <button class="tab">Model</button>
      <div class="tab active"><button>Layout1</button></div>
      <button class="tab l2">Layout2</button>
      <i class="slash"></i>
      <button class="add" aria-label="New layout"><svg class="s16"><use href="#plus" /></svg></button>
      <i class="slash"></i>
      <div class="status">
        <div class="sg"><button class="model">MODEL</button></div>
        <div class="sg w80"><button aria-label="Grid"><svg class="s20"><use href="#grid" /></svg></button><button aria-label="Snap"><svg class="s20"><use href="#dots" /></svg></button><svg class="carbig"><use href="#down" /></svg></div>
        <div class="sg"><button aria-label="Dynamic input"><svg class="s20"><use href="#dyn" /></svg></button></div>
        <div class="sg near w130"><button aria-label="Ortho"><svg class="s20"><use href="#ortho" /></svg></button><button class="on" aria-label="Polar"><svg class="s20"><use href="#polar" /></svg></button><svg class="carbig"><use href="#down" /></svg><button aria-label="Isodraft"><svg class="s20"><use href="#iso" /></svg></button><svg class="carbig"><use href="#down" /></svg></div>
        <div class="sg near w80"><button aria-label="Tracking"><svg class="s20"><use href="#track" /></svg></button><button class="on" aria-label="Object snap"><svg class="s20"><use href="#osnap" /></svg></button><svg class="carbig"><use href="#down" /></svg></div>
        <div class="sg w229"><button v-for="id in ['maxvp', 'anno', 'annoauto', 'vplock', 'vpscale']" :key="id" :aria-label="id"><svg class="s20"><use :href="'#' + id" /></svg></button><button class="ratio">1:10<svg class="carbig"><use href="#down" /></svg></button><button class="on" aria-label="Annotation visibility"><svg class="s20"><use href="#annovis" /></svg></button></div>
        <div class="sg w50"><button aria-label="Workspace"><svg class="s20"><use href="#gear" /></svg></button><svg class="carbig"><use href="#down" /></svg></div>
        <div class="sg near"><button aria-label="Annotation monitor"><svg class="s20"><use href="#plus" /></svg></button></div>
        <div class="sg"><button aria-label="Isolate objects"><svg class="s20"><use href="#isoobj" /></svg></button></div>
        <div class="sg w102"><button v-for="id in ['trusted', 'perf', 'hist']" :key="id" :aria-label="id"><svg :class="id === 'trusted' ? 's24' : 's20'"><use :href="'#' + id" /></svg></button></div>
        <div class="sg w60"><button aria-label="Clean screen"><svg class="s20"><use href="#clean" /></svg></button><button aria-label="Customization"><svg class="s20"><use href="#burger" /></svg></button></div>
      </div>
    </footer>
  </div>
</template>

<style>
body { background: #222933; }
</style>

<style scoped>
.app, .app * { box-sizing: border-box; }
.app { display: flex; flex-direction: column; min-height: 100vh; overflow: hidden; background: #222933; color: #f0f0f0; font: 14px/18px "Noto Sans", "Open Sans", sans-serif; }
.defs { position: absolute; width: 0; height: 0; }
button { background: none; border: 0; padding: 0; margin: 0; color: inherit; font: inherit; display: flex; align-items: center; white-space: nowrap; }
select { appearance: none; background: none; border: 0; padding: 0; margin: 0; color: inherit; font: inherit; flex: 1; min-width: 0; outline: 0; }
input { font: inherit; color: inherit; min-width: 0; border: 0; padding: 0; margin: 0; outline: 0; }
svg { flex: none; display: block; }
.s16 { width: 16px; height: 16px; } .s18 { width: 18px; height: 18px; } .s20 { width: 20px; height: 20px; } .s24 { width: 24px; height: 24px; } .s40 { width: 40px; height: 40px; }
.car { width: 6px; height: 4px; } .carbig { width: 10px; height: 6px; } .carcap { width: 10px; height: 6px; }

.titlebar { display: flex; height: 34px; align-items: flex-start; flex: none; }
.titlebar > * { height: 26px; }
.logo { width: 49px; padding-top: 2px; align-items: flex-start; }
.logo-a { width: 24px; height: 22px; background: #e51050; color: #fff; font-weight: 700; font-size: 16px; line-height: 22px; text-align: center; }
.logo-cad { width: 25px; height: 16px; margin-top: 3px; background: #7d0b2c; color: #fff; font-weight: 700; font-size: 9px; line-height: 16px; text-align: center; }
.quick { display: flex; gap: 10px; margin-left: 11px; }
.undo, .redo { gap: 9px; fill: #dcdcdc; }
.redo { fill: #6d727b; }
.combo { display: flex; align-items: center; gap: 4px; background: #4f5a6d; padding: 0 2px 0 6px; }
.combo-title { width: 223px; background: #3c4454; margin-left: 7px; padding-left: 3px; }
.swatch { width: 18px; height: 20px; border: 1px solid #e8e8e8; background: #000; margin: 0 1px 0 4px; flex: none; }
.customize { margin-left: 4px; }
.share { margin-left: 11px; gap: 6px; color: #6cbeff; }
.title { flex: 1; margin: 0; display: flex; justify-content: center; align-items: center; gap: 17px; font-size: 14px; font-weight: 400; padding-top: 3px; white-space: nowrap; }
.playhead { margin-right: 9px; }
.keyword { width: 223px; background: #4b5264; padding-left: 3px; font-style: italic; }
.keyword::placeholder { color: #b9bdc6; opacity: 1; font-size: 13px; }
.account { display: flex; align-items: center; padding-left: 5px; }
.who { gap: 7px; margin: 0 12px 0 10px; }
.who .car { margin-left: -5px; }
.store { margin-left: 10px; gap: 7px; padding-right: 13px; border-right: 1px solid #4b5264; height: 22px; }
.help { margin-left: 11px; gap: 10px; }
.help span { width: 20px; height: 20px; border-radius: 50%; background: #dcdcdc; color: #222933; line-height: 20px; text-align: center; font-weight: 600; }
.winbtns { display: flex; align-items: center; gap: 16px; margin: 0 5px 0 91px; }

.menu { display: flex; height: 25px; padding-left: 3px; flex: none; color: #bcc0c7; }
.menu button { padding: 0 11px; border: 1px solid transparent; }
.menu .on { background: #3c4454; color: #f0f0f0; }
.menu .ctx { background: #146690; border-color: #2094d4; color: #fff; }
.menu .minrib { padding: 0; margin-left: 26px; gap: 6px; }
.minrib i { width: 19px; height: 9px; background: #f0f0f0; display: flex; align-items: center; justify-content: center; }

.ribbon { display: flex; background: #3c4454; height: 124px; flex: none; }
.panel { position: relative; border-right: 1px solid #272d38; display: flex; flex-direction: column; flex: none; }
.tools { display: flex; height: 99px; padding-top: 5px; }
.p-draw { width: 278px; } .p-modify { width: 316px; } .p-anno { width: 184px; } .p-layers { width: 341px; } .p-block { width: 100px; }
.p-props { width: 277px; } .p-groups { width: 85px; } .p-util { width: 121px; } .p-clip { width: 113px; }
.p-view { flex: 1; border: 0; min-width: 104px; }
.big { flex-direction: column; padding-top: 3px; line-height: 20px; height: 89px; flex: none; text-align: center; }
.big .s40 { margin-bottom: 5px; }
.big .car { margin-top: 3px; }
.w44 { width: 44px; } .w52 { width: 52px; } .w54 { width: 54px; } .w60 { width: 60px; } .w66 { width: 66px; } .w70 { width: 70px; }
.w74 { width: 74px; } .w76 { width: 76px; } .w80 { width: 80px; } .w88 { width: 88px; }
.col { display: flex; flex-direction: column; }
.col button { height: 31px; gap: 10px; }
.pad8 { padding-left: 8px; } .pad6 { padding-left: 6px; } .pad4 { padding-left: 4px; } .pad2 { padding-left: 2px; }
.bigA { font: 50px/40px "Noto Sans", sans-serif; color: #dcdcdc; margin-bottom: 5px; height: 40px; }
.cap { justify-content: center; gap: 8px; height: 18px; width: 100%; }
.modify { display: grid; grid-template-columns: 91px 88px 95px 20px; grid-auto-rows: 31px; padding-left: 7px; }
.modify button { gap: 6px; }
.modify .car { margin-left: 8px; }
.lit { width: 73px; margin-left: 2px; background: #475c74; border: 1px solid #6cbeff; padding-top: 2px; }
.laycol { flex: 1; padding: 0 3px 0 2px; }
.boxed { height: 28px; border: 1px solid #2b323e; flex: 1; margin: 1px 0 2px; }
.boxed .carbig { margin-right: 1px; }
.laycol .boxed { gap: 5px; padding-left: 4px; }
.laycol .swatch { margin: 0 1px 0 0; }
.layrow { display: flex; gap: 10px; height: 31px; padding-left: 4px; }
.propcol { flex: 1; padding: 0 3px; }
.prow { display: flex; align-items: center; gap: 3px; height: 31px; }
.prow .swatch { margin: 0 2px; }
.rule { width: 80px; height: 1px; background: #f0f0f0; flex: none; margin-left: 1px; }
.launch { position: absolute; right: 6px; bottom: 8px; width: 8px; height: 8px; }
.p-groups .sq { width: 29px; height: 31px; justify-content: center; }
.p-groups .sqon { height: 27px; background: #475c74; border: 1px solid #6cbeff; margin-top: 1px; }
.capview { justify-content: flex-start; padding-left: 6px; }
.corner { width: 8px; height: 8px; margin-left: 4px; }

.strip { display: flex; align-items: stretch; flex: none; height: 32px; background: #222933; }
.slash { width: 22px; background: linear-gradient(112deg, transparent 46%, #515865 46% 54%, transparent 54%); clip-path: polygon(0 15%, 100% 15%, 100% 85%, 0 85%); }
.filetabs { padding-left: 5px; }
.tab { padding: 0 3px; display: flex; align-items: center; }
.filetabs .tab { padding-top: 3px; }
.filetabs .active { margin-left: 7px; }
.active { background: #3c4454; font-weight: 700; clip-path: polygon(11px 3px, 100% 3px, calc(100% - 11px) 100%, 0 100%); padding: 3px 16px 0 20px; gap: 10px; }
.filetabs .active { padding: 4px 16px 0 20px; }
.add { margin: 0 4px 0 10px; }

.work { flex: 1; display: flex; border-top: 6px solid #3c4454; border-bottom: 5px solid #3c4454; min-height: 0; }
.canvas { flex: 1; position: relative; background: #8a8a8a; min-width: 0; overflow: hidden; }
.sheet { position: absolute; inset: 0; width: 100%; height: 100%; }
.ucs { font: 200 22px "DejaVu Sans Light", "DejaVu Sans", sans-serif; fill: #222; }
.vplabel { font: 12px "Liberation Sans", sans-serif; fill: #fff; }
.top { font: 700 6px "Liberation Sans", sans-serif; fill: #868e98; text-anchor: middle; }
.nsew { font: 9px "Liberation Sans", sans-serif; fill: #aaa; text-anchor: middle; }
.wcs { font: 700 13px "Liberation Sans", sans-serif; fill: #bcbec6; }
.navbar { position: absolute; left: 540px; top: 135px; width: 43px; height: 179px; border: 1px solid #b5b5b5; border-radius: 5px; background: #f6f6f6; display: flex; flex-direction: column; align-items: center; padding-top: 2px; }
.nx { align-self: flex-end; margin: 0 2px 9px; }
.navbar hr { width: 34px; border: 0; border-top: 1px solid #d5d5d5; margin: 6px 0 4px; }
.nx + button { margin-top: 0; }
.navbar hr + button { margin-bottom: 5px; }
.nd { width: 6px; height: 4px; margin-top: 10px; }
.nd2 { width: 6px; height: 8px; margin-top: 12px; }

.cmd { position: absolute; left: 0; right: 5px; top: 1px; height: 33px; display: flex; background: rgba(255, 255, 255, .7); border-bottom: 1px solid #555; border-right: 1px solid #555; border-radius: 0 3px 3px 0; align-items: stretch; }
.cmd-grip { width: 71px; background: #4b5059; display: flex; align-items: center; gap: 15px; padding: 0 0 2px 4px; }
.cmd-grip i { width: 6px; height: 22px; background: radial-gradient(#dcdcdc 1px, transparent 1px) 0 0 / 3px 4px; margin-right: -7px; }
.cmd-icon { display: flex; align-items: center; gap: 2px; padding-left: 5px; }
.cmd input { flex: 1; background: none; margin-left: 9px; font: italic 15px "Liberation Mono", monospace; color: #333; }
.cmd input::placeholder { color: #6e6e6e; opacity: 1; }
.cmd-win { display: flex; align-items: center; gap: 11px; padding-right: 4px; }
.history { position: absolute; left: 78px; top: 36px; font: 15px/20px "Liberation Mono", monospace; display: flex; flex-direction: column; align-items: flex-start; gap: 5px; }
.history p { margin: 0; padding: 0 2px; background: rgba(96, 96, 96, .75); border-radius: 3px; }

.palette { width: 396px; flex: none; background: #3c4454; display: flex; flex-direction: column; padding: 3px 0 0 5px; overflow: hidden; }
.pal-title { margin: 0; height: 26px; background: #2c323f; font-size: 14px; font-weight: 400; display: flex; align-items: center; gap: 8px; padding-left: 8px; border-radius: 4px 0 0 0; }
.pal-title i { width: 3px; height: 10px; background: radial-gradient(#b5b8be 1px, transparent 1px) 0 0 / 2px 3px; }
.pal-top { display: flex; justify-content: space-between; align-items: center; height: 38px; padding: 8px 0 0 6px; }
.pal-search { width: 154px; height: 20px; background: #4f5a6d; display: flex; align-items: center; margin-top: -8px; }
.pal-search input { flex: 1; background: none; }
.pal-search input::placeholder { color: #b9bdc6; opacity: 1; }
.pal-bar { display: flex; height: 26px; align-items: center; flex: none; padding-left: 3px; }
.g1, .g2, .g3 { display: flex; align-items: center; gap: 8px; }
.g1 { width: 142px; } .g1 i { width: 1px; height: 22px; background: #232934; }
.g2 { width: 159px; gap: 7px; } .g3 { gap: 7px; }
.pal-body { display: flex; flex: 1; min-height: 0; gap: 5px; }
.filters { width: 137px; border: 1px solid #2c323e; display: flex; flex-direction: column; flex: none; }
.f-head { height: 28px; display: flex; justify-content: space-between; align-items: center; padding: 0 5px 0 6px; border-bottom: 1px solid #2c323e; }
.chev { width: 16px; height: 12px; }
.tree { list-style: none; margin: 0; padding: 6px 0 0 8px; flex: 1; }
.tree li { display: flex; align-items: center; height: 22px; white-space: nowrap; }
.minus { width: 11px; height: 11px; background: linear-gradient(#333, #333) center / 7px 1px no-repeat #f0f0f0; }
.dotted { width: 8px; height: 1px; border-top: 1px dotted #b5b8be; margin: 0 2px; }
.sel { background: #7589a8; margin-left: 4px; padding: 2px 3px 2px 1px; }
.tree .child { padding-left: 29px; }
.elbow { width: 13px; height: 12px; border-left: 1px dotted #b5b8be; border-bottom: 1px dotted #b5b8be; margin: -11px 3px 0 0; }
.child span { margin-left: 6px; }
.hscroll { height: 21px; border: 1px solid #8d929c; background: #eee; margin-bottom: 2px; padding: 8px 42px 0 20px; }
.hscroll i, .hscroll2 i { display: block; height: 3px; border-radius: 2px; background: #878787; }
.invert { height: 27px; border-top: 1px solid #2c323e; display: flex; align-items: center; justify-content: space-between; padding: 0 5px 2px 6px; }
.invert label { display: flex; align-items: center; gap: 6px; white-space: nowrap; }
.invert input { appearance: none; width: 15px; height: 15px; border-radius: 3px; background: #f2f2f2; border: 1px solid #8d929c; }
.list { flex: 1; display: flex; flex-direction: column; min-width: 0; }
.tablewrap { flex: 1; overflow: hidden; background: linear-gradient(to right, transparent 114px, #2c323e 114px 117px, transparent 117px); }
table { table-layout: fixed; width: 292px; border-collapse: collapse; }
th { width: 23px; height: 29px; padding: 0 0 0 4px; font-weight: 400; text-align: left; background: #464e5e; border-right: 1px solid #2c323e; overflow: hidden; white-space: nowrap; }
td { height: 23px; padding: 0 0 0 3px; white-space: nowrap; }
td:nth-child(n+4) { padding-left: 3px; }
th.nm { width: 91px; padding-left: 5px; } td.nm { padding-left: 4px; }
th.gap { width: 3px; padding: 0; border: 0; background: #2c323e; } td.gap { background: #2c323e; padding: 0; }
th.cl { width: 60px; }
.srt svg { display: inline-block; vertical-align: middle; }
td.cl i { display: block; width: 24px; height: 15px; border: 1px solid #e8e8e8; }
.cur { background: #7589a8; }
.hscroll2 { height: 21px; background: #eee; padding-top: 9px; }
.hscroll2 i { width: 28px; margin-left: 21px; }
.pal-status { margin: 0; padding: 52px 0 10px 5px; height: 81px; flex: none; }

.bottom { height: 31px; padding-left: 5px; }
.bottom .tab { padding: 0 4px; }
.bottom .active { margin-left: 7px; padding: 0 22px; clip-path: polygon(11px 0, 100% 0, calc(100% - 11px) 100%, 0 100%); }
.bottom .l2 { padding-left: 9px; }
.bottom .add { margin: 0 2px 0 7px; }
.status { margin-left: auto; display: flex; gap: 3px; padding-top: 2px; }
.sg { display: flex; align-items: center; justify-content: space-around; background: #3c4454; min-width: 30px; }
.sg > button { height: 28px; min-width: 28px; justify-content: center; }
.sg .on { background: #5f8fc4; }
.near { margin-left: -2px; }
.model { padding: 0 4px; }
.ratio { gap: 4px; }
.w130 { width: 130px; } .w229 { width: 230px; } .w102 { width: 103px; } .sg.w50 { width: 52px; } .sg.w60 { width: 60px; }
</style>
